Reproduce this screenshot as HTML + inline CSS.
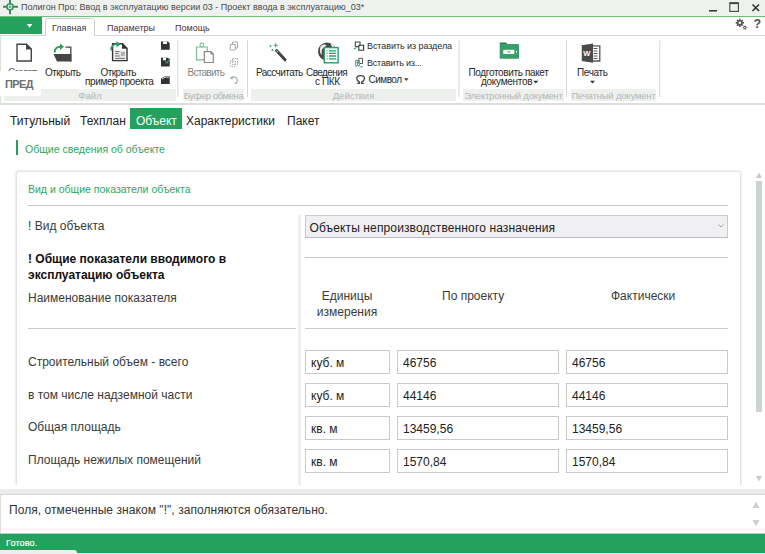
<!DOCTYPE html>
<html><head><meta charset="utf-8">
<style>
*{margin:0;padding:0;box-sizing:border-box}
html,body{width:765px;height:554px;overflow:hidden;background:#fff;font-family:"Liberation Sans",sans-serif;color:#222}
.a{position:absolute;white-space:nowrap}
#title{left:0;top:0;width:765px;height:16px;background:#eef1ee}
#gline{left:0;top:16px;width:765px;height:1px;background:#6cc07a}
#filebtn{left:0;top:17px;width:42px;height:17px;background:#23a15d}
#ribbon{left:0;top:35px;width:765px;height:70px;background:#fff;border-top:1px solid #d6d8d6;border-bottom:2px solid #dcdedc}
.glab{position:absolute;top:89px;height:12px;background:#eef0ee;color:#b4b6b8;font-size:9.5px;line-height:13px;text-align:center;white-space:nowrap}
.sep{position:absolute;top:40px;width:1px;height:60px;background:#d8dad8}
.rt{font-size:10px;color:#2a2a2a;position:absolute;white-space:nowrap;line-height:10px;margin-top:-0.5px}
.tab{position:absolute;top:22px;font-size:9px;line-height:12px;color:#552f30;white-space:nowrap}
.nav{font-size:12px;color:#222;top:113px;line-height:16px}
.lbl{font-size:12px;color:#3a3a3a;line-height:14px}
.box{position:absolute;border:1px solid #c9cacd;background:#fff;height:24px;font-size:12px;line-height:22px;padding-top:1px;padding-left:5px;color:#222;white-space:nowrap}
.hl{position:absolute;height:1px;background:#c8cacd}
</style></head><body>
<div id="title" class="a"></div>
<div id="gline" class="a"></div>
<div id="filebtn" class="a"></div>
<div class="a" style="left:21px;top:1px;font-size:9px;color:#4a4a4a;line-height:12px">Полигон Про: Ввод в эксплуатацию версии 03 - Проект ввода в эксплуатацию_03*</div>
<div id="ribbon" class="a"></div>
<div class="a" style="left:0;top:35px;width:1px;height:69px;background:#d8e2d8"></div>

<svg class="a" style="left:0;top:0" width="765" height="554" viewBox="0 0 765 554">
<!-- app icon -->
<g stroke="#33905d" fill="none">
<path d="M10 0V14.2M3 6.8H18" stroke-width="2"/>
<circle cx="10" cy="6.8" r="3.1" stroke-width="1.5" fill="#eef1ee"/>
<circle cx="10" cy="6.8" r="0.9" stroke-width="0.9"/>
</g>
<!-- window controls -->
<path d="M709 10.8H717" stroke="#333" stroke-width="1.5"/>
<rect x="729.8" y="2.8" width="8.6" height="8.6" stroke="#444" stroke-width="1.1" fill="none"/>
<path d="M729.8 3.3H738.4" stroke="#444" stroke-width="1.6"/>
<path d="M752.5 4.5L759 11M759 4.5L752.5 11" stroke="#333" stroke-width="1.6"/>
<!-- file button triangle -->
<path d="M26.8 24H32.4L29.6 27.8Z" fill="#fff"/>
<!-- tab Главная border -->
<path d="M45.5 36V20.5Q45.5 18.5 47.5 18.5H92.5Q94.5 18.5 94.5 20.5V36" stroke="#cfd2cf" fill="#fff"/><rect x="46" y="34.5" width="48" height="1.2" fill="#fff"/>
<!-- gear & help -->
<path d="M742.68 21.97 L743.94 22.10 L743.94 23.50 L742.68 23.63 L742.42 24.25 L743.22 25.23 L742.23 26.22 L741.25 25.42 L740.63 25.68 L740.50 26.94 L739.10 26.94 L738.97 25.68 L738.35 25.42 L737.37 26.22 L736.38 25.23 L737.18 24.25 L736.92 23.63 L735.66 23.50 L735.66 22.10 L736.92 21.97 L737.18 21.35 L736.38 20.37 L737.37 19.38 L738.35 20.18 L738.97 19.92 L739.10 18.66 L740.50 18.66 L740.63 19.92 L741.25 20.18 L742.23 19.38 L743.22 20.37 L742.42 21.35Z" fill="#555"/>
<circle cx="739.8" cy="22.8" r="1.3" fill="#fff"/>
<path d="M746.21 27.09 L746.95 27.14 L746.95 28.06 L746.21 28.11 L745.95 28.56 L746.27 29.23 L745.48 29.69 L745.06 29.08 L744.54 29.08 L744.12 29.69 L743.33 29.23 L743.65 28.56 L743.39 28.11 L742.65 28.06 L742.65 27.14 L743.39 27.09 L743.65 26.64 L743.33 25.97 L744.12 25.51 L744.54 26.12 L745.06 26.12 L745.48 25.51 L746.27 25.97 L745.95 26.64Z" fill="#666"/>
<circle cx="744.8" cy="27.6" r="0.7" fill="#fff"/>
<!-- ===== Ribbon icons ===== -->
<!-- new doc -->
<path d="M17 44.2H26.5L31.3 49V61H17Z" fill="none" stroke="#444" stroke-width="1.4"/>
<path d="M26 43.5L32 49.5H26Z" fill="#444"/>
<!-- open folder -->
<path d="M65.5 47.2H70.8V61.6" fill="none" stroke="#444" stroke-width="1.3"/>
<path d="M53.5 54H71.4V61.6H57Z" fill="#444"/>
<path d="M55 52.5C54 49 57 46.5 61 46.8" fill="none" stroke="#2e9960" stroke-width="1.8"/>
<path d="M60 43.5L64 46.8L60 50Z" fill="#2e9960"/>
<!-- open example -->
<path d="M112.6 43.8H122.5L127 48.3V60.6H112.6Z" fill="#fff" stroke="#333" stroke-width="1.4"/>
<path d="M122 43.2L127.6 48.8H122Z" fill="#333"/>
<rect x="114.5" y="50.5" width="11" height="9" fill="#e4e4e4"/>
<g stroke="#7a7a7a" stroke-width="1">
<path d="M115 51.5H119.5M115 53.5H118.5M115 56H120M121 53H125M121 55H124.5M115 58.5H125"/>
</g>
<path d="M111.5 50.5C110.5 46.5 113.5 43.8 117.5 44.2" fill="none" stroke="#2e9960" stroke-width="1.8"/>
<path d="M116.5 41L120.5 44.2L116.5 47.4Z" fill="#2e9960"/>
<!-- save icons -->
<path d="M161 41.5H168L169.7 43.2V49.7H161Z" fill="#333"/>
<rect x="163" y="41.5" width="4" height="2.5" fill="#fff"/>
<path d="M161 57.8H168L169.7 59.5V66.5H161Z" fill="#333"/>
<rect x="163" y="57.8" width="3" height="2.5" fill="#fff"/>
<path d="M165.5 61.5L167 63L170 58.5" fill="none" stroke="#2e9960" stroke-width="1.3"/>
<path d="M161 78.5L165 76.3H169.7V84H161Z" fill="#333"/>
<path d="M162 79L165.2 77.2H169" fill="none" stroke="#fff" stroke-width="0.8"/>
<!-- paste -->
<path d="M196.5 47H207.2V59.8H196.5Z" fill="#fff" stroke="#7bbf98" stroke-width="1.2"/>
<circle cx="201.9" cy="45" r="1.9" fill="#fff" stroke="#7bbf98" stroke-width="1.1"/>
<path d="M204.3 51.6H210.8L213.3 54.1V62.5H204.3Z" fill="#fff" stroke="#888" stroke-width="1.2"/>
<path d="M210.5 51.3L213.6 54.4H210.5Z" fill="#888"/>
<!-- copy/cut/undo -->
<g fill="none" stroke="#aaa" stroke-width="1">
<path d="M232.5 42H237.5V48H232.5Z"/>
<path d="M230.3 44.5H235.3V50H230.3Z" fill="#fff"/>
<path d="M232.5 58.5H237.5V64.5H232.5Z" stroke-dasharray="1.5 1"/>
<path d="M230.3 61H235.3V66.3H230.3Z" stroke-dasharray="1.5 1"/>
<path d="M231 78C233 76 237 77 237.3 80C237.5 82 236 83.3 234.5 83.5" stroke-width="1.2"/>
<path d="M229.8 78.4L232.5 75.8L232.8 79.5Z" fill="#aaa" stroke="none"/>
</g>
<!-- wand -->
<path d="M276.5 50.5L285 59.8" stroke="#444" stroke-width="3" stroke-linecap="round"/>
<path d="M276.5 50.5L278 52.2" stroke="#fff" stroke-width="0.8"/>
<g stroke="#3aa876" stroke-width="1">
<path d="M275.7 43.2V47.4M273.6 45.3H277.8"/>
<path d="M270.4 45V47M269.4 46H271.4"/>
<path d="M272.4 49V51M271.4 50H273.4"/>
</g>
<!-- globe -->
<circle cx="327.2" cy="51.6" r="9.2" fill="#484848"/>
<path d="M320.5 46.5C322.5 44.2 325 44 326.5 45.2C325.5 47 323 47.5 322 49.5C321.3 51 322.2 53 321.6 55C320.6 54 319.8 52 319.9 50C320 48.5 320.2 47.3 320.5 46.5Z" fill="#fff" opacity="0.9"/>
<path d="M330.5 43.2C332.3 43.8 333.8 44.8 335 46.3L332.5 47.2C331.5 46 330.8 44.8 330.5 43.2Z" fill="#fff" opacity="0.9"/>
<rect x="324.3" y="47.6" width="13.8" height="15.2" fill="#fff" stroke="#2e9a6e" stroke-width="1.4"/>
<g stroke="#2e9a6e" stroke-width="1.3">
<path d="M326.6 50.8H327.6M329 50.8H336.2M326.6 53.4H327.6M329 53.4H336.2M326.6 56H327.6M329 56H336.2M326.6 58.8H327.6M329 58.8H336.2"/>
</g>
<!-- insert from section -->
<g fill="none" stroke="#444" stroke-width="1.1">
<path d="M355.3 42H360V46.5H355.3Z"/>
<path d="M358.8 45.3H363.6V50.2H358.8Z" fill="#fff" stroke="#333"/>
</g>
<path d="M357.5 47.2C356 47.2 355 47.8 354.8 49M354.2 47.8L354.8 49.3L356 48.3" fill="none" stroke="#3aa876" stroke-width="0.9"/>
<!-- insert from ... -->
<path d="M358.8 58.3H362.5V63.5H358.8Z" fill="#fff" stroke="#555" stroke-width="1"/>
<g fill="none" stroke="#5aa883" stroke-width="1">
<path d="M355.5 60.5H359.5V65.5H355.5Z"/>
<path d="M355 62.8H360M357.5 60.5V65.5"/>
<path d="M355.5 66.8L357 65.5M358 65.5L359.5 66.8M360 66.8H363"/>
</g>
<!-- omega -->
<path d="M357.3 83.3H359.5V82.2C357.6 81.2 356.7 79.6 356.7 78.3C356.7 76.2 358.5 75.6 360.6 75.6C362.7 75.6 364.5 76.2 364.5 78.3C364.5 79.6 363.6 81.2 361.7 82.2V83.3H363.9" fill="none" stroke="#444" stroke-width="1.3"/>
<path d="M404 78.3H408.6L406.3 80.9Z" fill="#444"/>
<!-- green folder -->
<path d="M499.7 44.3V42.6H506L507.5 44.3Z" fill="#2e7f56"/>
<rect x="499.7" y="44" width="19.3" height="14.7" rx="1" fill="#3a9e6c"/>
<rect x="503.3" y="49.8" width="11" height="4.2" fill="#fff"/>
<path d="M507 51.5H510.5M508 52.6H509.8" stroke="#3a9e6c" stroke-width="0.6"/>
<rect x="516" y="51" width="1" height="1.5" fill="#fff"/>
<path d="M533.3 80.8H538.3L535.8 83.6Z" fill="#333"/>
<!-- word -->
<path d="M588 45.8H599.8V61H588Z" fill="#fff" stroke="#555" stroke-width="1.3"/>
<path d="M593.5 48.5H597.5M593.5 51H597.5M593.5 53.5H597.5M593.5 56H597.5M593.5 58.5H597.5" stroke="#555" stroke-width="1"/>
<path d="M581.8 45.3L593 43.6V62.8L581.8 61Z" fill="#4a4a4a"/>
<text x="583.3" y="56" font-family="Liberation Sans" font-weight="bold" font-size="7.5" fill="#fff">W</text>
<path d="M590 80.8H595L592.5 83.6Z" fill="#333"/>

<!-- separators -->
<g stroke="#d5d7d5" stroke-width="1">
<path d="M177.8 40.5V97M247.5 40.5V97M459 40.5V97M566.5 40.5V97M659.8 40.5V97"/>
</g>
</svg>

<!-- tabs -->
<div class="tab" style="left:52px;color:#3c3344">Главная</div>
<div class="tab" style="left:107px">Параметры</div>
<div class="tab" style="left:175px">Помощь</div>
<div class="a" style="left:753.5px;top:17.5px;font-size:12.5px;font-weight:bold;color:#505050;line-height:13px">?</div>

<!-- ribbon texts -->
<div class="rt" style="left:8px;top:68px;letter-spacing:-0.9px;color:#666">Создать</div>
<div class="rt" style="left:45px;top:68px;letter-spacing:-0.54px">Открыть</div>
<div class="rt" style="left:100.5px;top:68px;letter-spacing:-0.54px">Открыть</div>
<div class="rt" style="left:85px;top:77.5px;letter-spacing:-0.39px">пример проекта</div>
<div class="rt" style="left:187.5px;top:68px;color:#858585;letter-spacing:-0.72px">Вставить</div>
<div class="rt" style="left:256px;top:68px;letter-spacing:-0.55px">Рассчитать</div>
<div class="rt" style="left:306px;top:68px;letter-spacing:-0.59px">Сведения</div>
<div class="rt" style="left:315px;top:77.5px;letter-spacing:-0.4px">с ПКК</div>
<div class="rt" style="left:367px;top:41px;font-size:9px;letter-spacing:-0.07px">Вставить из раздела</div>
<div class="rt" style="left:367px;top:58px;font-size:9px;letter-spacing:-0.19px">Вставить из...</div>
<div class="rt" style="left:368.5px;top:75.8px;letter-spacing:-0.51px">Символ</div>
<div class="rt" style="left:468.5px;top:68px;letter-spacing:-0.35px">Подготовить пакет</div>
<div class="rt" style="left:481px;top:77.5px;letter-spacing:-0.28px">документов</div>
<div class="rt" style="left:577px;top:68px;letter-spacing:-0.35px">Печать</div>

<div class="glab" style="left:4px;width:172px">Файл</div>
<div class="glab" style="left:183px;width:61px;letter-spacing:-0.42px">Буфер обмена</div>
<div class="glab" style="left:251px;width:205px">Действия</div>
<div class="glab" style="left:463px;width:101px;letter-spacing:-0.22px">Электронный документ</div>
<div class="glab" style="left:571px;width:85px;letter-spacing:-0.19px">Печатный документ</div>

<div class="a" style="left:0;top:71px;width:41px;height:25px;background:#fff;border-radius:0 2px 2px 0"></div>
<div class="a" style="left:5px;top:78px;font-size:11px;font-weight:bold;color:#707070;line-height:12px;letter-spacing:-0.6px">ПРЕД</div>
<!-- nav tabs -->
<div class="a" style="left:130px;top:108px;width:52px;height:21px;background:#23a15d"></div>
<div class="a nav" style="left:10px">Титульный</div>
<div class="a nav" style="left:80px">Техплан</div>
<div class="a nav" style="left:136px;color:#fff">Объект</div>
<div class="a nav" style="left:186px">Характеристики</div>
<div class="a nav" style="left:287px">Пакет</div>

<div class="a" style="left:16px;top:140px;width:2px;height:15px;background:#23a15d"></div>
<div class="a" style="left:25px;top:143px;font-size:10.5px;color:#2ba865;line-height:12px">Общие сведения об объекте</div>

<!-- card -->
<div class="a" style="left:15.5px;top:171px;width:725px;height:330px;background:#fff;border:1px solid #e4e4e4;border-radius:3px;box-shadow:0 0 2px 1px rgba(0,0,0,.07)"></div>
<div class="a" style="left:28px;top:183px;font-size:10.5px;color:#2ba865;line-height:12px">Вид и общие показатели объекта</div>
<div class="hl" style="left:28px;top:205px;width:700px"></div>
<div class="a lbl" style="left:28px;top:219px">! Вид объекта</div>
<div class="a" style="left:298px;top:215px;width:3px;height:275px;background:#efefef"></div>
<div class="box" style="left:305px;top:215px;width:423px;height:23px;background:#f0f0f2;padding-left:3.5px;padding-top:0.8px;letter-spacing:0.13px;border-bottom-color:#b9bac2">Объекты непроизводственного назначения</div>
<div class="hl" style="left:305px;top:257px;width:423px"></div>
<svg class="a" style="left:716px;top:222px" width="10" height="8" viewBox="0 0 10 8"><path d="M2.5 2.5L5 5L7.5 2.5" fill="none" stroke="#a0a0a0" stroke-width="1"/></svg>
<div class="a" style="left:28px;top:250.5px;font-size:12px;font-weight:bold;line-height:16.3px;color:#111">! Общие показатели вводимого в<br>эксплуатацию объекта</div>
<div class="a lbl" style="left:28px;top:291.3px">Наименование показателя</div>
<div class="a lbl" style="left:316px;top:287.8px;text-align:center;line-height:16px;width:62px">Единицы<br>измерения</div>
<div class="a lbl" style="left:442px;top:289px">По проекту</div>
<div class="a lbl" style="left:611px;top:289px">Фактически</div>
<div class="hl" style="left:28px;top:328px;width:268px"></div>
<div class="hl" style="left:305px;top:328px;width:423px"></div>

<div class="a lbl" style="left:28px;top:355px">Строительный объем - всего</div>
<div class="a lbl" style="left:28px;top:388px">в том числе надземной части</div>
<div class="a lbl" style="left:28px;top:420px">Общая площадь</div>
<div class="a lbl" style="left:28px;top:453px">Площадь нежилых помещений</div>

<div class="box" style="left:305px;top:350px;width:85px">куб. м</div>
<div class="box" style="left:397px;top:350px;width:162px">46756</div>
<div class="box" style="left:566px;top:350px;width:162px">46756</div>
<div class="box" style="left:305px;top:383px;width:85px">куб. м</div>
<div class="box" style="left:397px;top:383px;width:162px">44146</div>
<div class="box" style="left:566px;top:383px;width:162px">44146</div>
<div class="box" style="left:305px;top:416px;width:85px">кв. м</div>
<div class="box" style="left:397px;top:416px;width:162px">13459,56</div>
<div class="box" style="left:566px;top:416px;width:162px">13459,56</div>
<div class="box" style="left:305px;top:449px;width:85px">кв. м</div>
<div class="box" style="left:397px;top:449px;width:162px">1570,84</div>
<div class="box" style="left:566px;top:449px;width:162px">1570,84</div>

<!-- message area -->
<div class="a" style="left:0;top:485px;width:752px;height:5px;background:#fff"></div>
<div class="a" style="left:0;top:489px;width:765px;height:6px;background:#ececec;border-bottom:1px solid #d2d6d2"></div>
<div class="a" style="left:0;top:495px;width:765px;height:39px;background:#fff;border-left:1px solid #dde0dd"></div>
<div class="a" style="left:9px;top:503px;font-size:12px;color:#333;line-height:14px;letter-spacing:0.06px">Поля, отмеченные знаком "!", заполняются обязательно.</div>
<div class="a" style="left:0;top:533px;width:765px;height:1px;background:#c8c0cc"></div><div class="a" style="left:0;top:534px;width:765px;height:19px;background:#23a15d"></div><div class="a" style="left:0;top:553px;width:765px;height:1px;background:#e8eee8"></div>
<div class="a" style="left:0;top:550px;width:77px;height:4px;background:#eeeeee;border-radius:0 3px 0 0"></div>
<div class="a" style="left:6px;top:538px;font-size:9px;color:#fff;line-height:11px;letter-spacing:0.15px;-webkit-text-stroke:0.2px #fff">Готово.</div>
<!-- scrollbar -->
<div class="a" style="left:756px;top:181px;width:6px;height:231px;background:#cdd3cd"></div>
<svg class="a" style="left:0;top:0" width="765" height="554" viewBox="0 0 765 554">
<path d="M756 178H762L759 172.5Z" fill="#c9cbc9"/>
<path d="M756 476H762L759 481.5Z" fill="#c9cbc9"/>
<path d="M752.5 508H759.5L756 501.5Z" fill="#cfd0cf"/>
<path d="M752.5 520H759.5L756 526.5Z" fill="#cfd0cf"/>
</svg>

</body></html>
